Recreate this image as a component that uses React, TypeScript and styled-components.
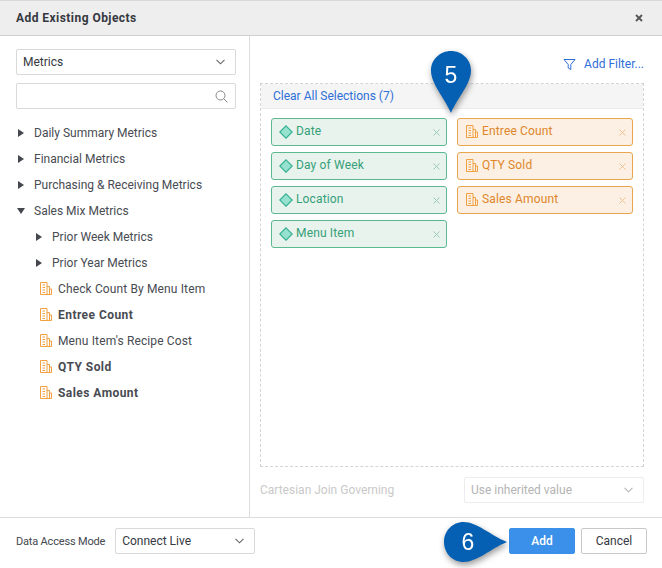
import React from "react";
import styled, { createGlobalStyle } from "styled-components";

const Global = createGlobalStyle`
  html, body { margin: 0; padding: 0; background: #fff; }
  body { font-family: Roboto, "Liberation Sans", Arial, sans-serif; font-size: 12px; color: #35383f; }
`;

const Dialog = styled.div`
  position: relative;
  width: 662px;
  height: 568px;
  display: flex;
  flex-direction: column;
  overflow: hidden;
  background: #fff;
`;
const Header = styled.header`
  height: 36px;
  flex: none;
  box-sizing: border-box;
  display: flex;
  align-items: center;
  justify-content: space-between;
  padding: 0 19px 0 16px;
  background: #eeeeee;
  border-top: 1px solid #d8d8d8;
  border-bottom: 1px solid #cfcfcf;
`;
const Title = styled.div`
  font-weight: 700;
  font-size: 12px;
  letter-spacing: 0.45px;
  color: #35383f;
`;
const Close = styled.svg`
  width: 8px;
  height: 8px;
`;
const Body = styled.div`
  flex: 1;
  min-height: 0;
  display: flex;
`;
const Left = styled.div`
  width: 250px;
  flex: none;
  padding: 13px 13px 0 16px;
  box-sizing: border-box;
  border-right: 1px solid #dcdcdc;
`;
const SelectBox = styled.div<{ $w?: number; $muted?: boolean }>`
  width: ${(p) => (p.$w ? `${p.$w}px` : "auto")};
  height: 26px;
  box-sizing: border-box;
  display: flex;
  align-items: center;
  justify-content: space-between;
  padding: 0 10px 0 6px;
  border: 1px solid ${(p) => (p.$muted ? "#ececec" : "#d9d9d9")};
  border-radius: 2px;
  background: #fff;
  color: ${(p) => (p.$muted ? "#b4b4b4" : "#35383f")};
`;
const SearchBox = styled(SelectBox)`
  margin-top: 8px;
  padding-right: 7px;
  justify-content: flex-end;
`;
const Tree = styled.div`
  margin-top: 11px;
`;
const Row = styled.div<{ $indent: number; $bold?: boolean; $leaf?: boolean }>`
  height: 26px;
  display: flex;
  align-items: center;
  padding-left: ${(p) => p.$indent}px;
  font-weight: ${(p) => (p.$bold ? 700 : 400)};
  letter-spacing: ${(p) => (p.$bold ? "0.45px" : p.$leaf ? "0.13px" : "0")};
  color: #484b52;
`;
const Arrow = styled.span`
  width: 18px;
  flex: none;
  display: flex;
  align-items: center;
  padding-left: 2px;
  box-sizing: border-box;
`;
const MetricSlot = styled.span`
  width: 18px;
  height: 14px;
  flex: none;
  display: flex;
  align-items: flex-start;
`;
const Right = styled.div`
  flex: 1;
  min-width: 0;
  display: flex;
  flex-direction: column;
  padding: 0 18px 14px 10px;
`;
const FilterBar = styled.div`
  height: 47px;
  flex: none;
  display: flex;
  align-items: center;
  justify-content: flex-end;
  padding-top: 9px;
  box-sizing: border-box;
  gap: 8px;
  color: #2f6fd6;
`;
const Drop = styled.div`
  flex: 1;
  min-height: 0;
  border: 1px dashed #d4d4d4;
`;
const DropHead = styled.div`
  height: 24px;
  display: flex;
  align-items: center;
  padding-left: 12px;
  background: #f5f5f5;
  border-bottom: 1px solid #ececec;
  color: #2f6fd6;
`;
const Chips = styled.div`
  display: grid;
  grid-template-columns: 176px 176px;
  grid-auto-rows: 28px;
  column-gap: 10px;
  row-gap: 6px;
  padding: 9px 10px;
`;
const Chip = styled.div<{ $kind: "attr" | "metric" }>`
  display: flex;
  align-items: center;
  box-sizing: border-box;
  padding: 0 6px 2px ${(p) => (p.$kind === "attr" ? 7 : 8)}px;
  border: 1px solid ${(p) => (p.$kind === "attr" ? "#5cb88f" : "#e9a64e")};
  border-radius: 3px;
  background: ${(p) => (p.$kind === "attr" ? "#e8f3ee" : "#fbf0e3")};
  color: ${(p) => (p.$kind === "attr" ? "#35a078" : "#e0862a")};
`;
const ChipLabel = styled.span<{ $kind: "attr" | "metric" }>`
  flex: 1;
  margin-left: ${(p) => (p.$kind === "attr" ? 3 : 4)}px;
  letter-spacing: 0.15px;
`;
const ChipIcon = styled.span<{ $kind: "attr" | "metric" }>`
  display: flex;
  flex: none;
  margin-top: ${(p) => (p.$kind === "attr" ? 2 : 1)}px;
`;
const ChipX = styled.svg`
  width: 7px;
  height: 7px;
  flex: none;
  margin-top: 2px;
`;
const Governing = styled.div`
  flex: none;
  margin-top: 10px;
  display: flex;
  align-items: center;
  justify-content: space-between;
  color: #c9c9c9;
`;
const Footer = styled.footer`
  height: 51px;
  flex: none;
  box-sizing: border-box;
  border-top: 1px solid #dcdcdc;
  display: flex;
  align-items: center;
  padding: 0 15px 4px 16px;
`;
const ModeLabel = styled.span`
  font-size: 11px;
  letter-spacing: -0.18px;
  margin-right: 10px;
  color: #44474e;
`;
const Spacer = styled.div`
  flex: 1;
`;
const Button = styled.button<{ $primary?: boolean }>`
  width: 66px;
  height: 26px;
  margin-left: 6px;
  padding: 0;
  font: inherit;
  font-weight: ${(p) => (p.$primary ? 500 : 400)};
  border-radius: 2px;
  border: 1px solid ${(p) => (p.$primary ? "#3b91ea" : "#c9c9c9")};
  background: ${(p) => (p.$primary ? "#3b91ea" : "#fff")};
  color: ${(p) => (p.$primary ? "#fff" : "#35383f")};
`;
const PinWrap = styled.div<{ $x: number; $y: number; $w: number; $h: number }>`
  position: absolute;
  left: ${(p) => p.$x}px;
  top: ${(p) => p.$y}px;
  width: ${(p) => p.$w}px;
  height: ${(p) => p.$h}px;
  filter: drop-shadow(1px 3px 3px rgba(0, 0, 0, 0.4));
`;
const PinSvg = styled.svg`
  display: block;
  width: 100%;
  height: 100%;
`;
const PinNum = styled.span<{ $x: number; $y: number }>`
  position: absolute;
  left: ${(p) => p.$x}px;
  top: ${(p) => p.$y}px;
  width: 24px;
  text-align: center;
  font-family: "Liberation Sans", Arial, sans-serif;
  font-size: 23px;
  line-height: 24px;
  color: #fff;
`;

const Chevron = () => (
  <svg width="9" height="6" viewBox="0 0 9 6">
    <path d="M.5.8 4.5 4.8l4-4" fill="none" stroke={"#666"} strokeWidth="1.1" />
  </svg>
);
const MutedChevron = () => (
  <svg width="9" height="6" viewBox="0 0 9 6">
    <path d="M.5.8 4.5 4.8l4-4" fill="none" stroke={"#b5b5b5"} strokeWidth="1.1" />
  </svg>
);
const Caret = ({ open }: { open?: boolean }) =>
  open ? (
    <svg width="8" height="6" viewBox="0 0 8 6" style={{ marginLeft: -1 }}><path d="M0 0h8L4 6z" fill="#44474e" /></svg>
  ) : (
    <svg width="6" height="8" viewBox="0 0 6 8"><path d="M0 0l6 4-6 4z" fill="#44474e" /></svg>
  );
const MetricIcon = () => (
  <svg width="12" height="13" viewBox="0 0 12 13" fill="none" stroke="#f0a040" strokeWidth="1">
    <path d="M.5.5h6.5v12H.5zM7 4.5h2.5v8H7M9.5 7h2v5.5h-2M2.5 3h2.5M2.5 5.5h2.5M2.5 8h2.5M2.5 10.5h2.5" />
  </svg>
);
const AttrIcon = () => (
  <svg width="14" height="14" viewBox="0 0 14 14">
    <path d="M7 .8 13.2 7 7 13.2.8 7z" fill="#97e2cf" stroke="#36b193" strokeWidth="1.2" />
  </svg>
);
const Cross = ({ c }: { c: string }) => (
  <ChipX viewBox="0 0 7 7"><path d="M.5.5l6 6M6.5.5l-6 6" stroke={c} strokeWidth="1" /></ChipX>
);

type Item = { label: string; indent: number; kind: "caret" | "open" | "metric"; bold?: boolean };
const items: Item[] = [
  { label: "Daily Summary Metrics", indent: 0, kind: "caret" },
  { label: "Financial Metrics", indent: 0, kind: "caret" },
  { label: "Purchasing & Receiving Metrics", indent: 0, kind: "caret" },
  { label: "Sales Mix Metrics", indent: 0, kind: "open" },
  { label: "Prior Week Metrics", indent: 18, kind: "caret" },
  { label: "Prior Year Metrics", indent: 18, kind: "caret" },
  { label: "Check Count By Menu Item", indent: 24, kind: "metric" },
  { label: "Entree Count", indent: 24, kind: "metric", bold: true },
  { label: "Menu Item's Recipe Cost", indent: 24, kind: "metric" },
  { label: "QTY Sold", indent: 24, kind: "metric", bold: true },
  { label: "Sales Amount", indent: 24, kind: "metric", bold: true },
];
const chips: { label: string; kind: "attr" | "metric" }[] = [
  { label: "Date", kind: "attr" },
  { label: "Entree Count", kind: "metric" },
  { label: "Day of Week", kind: "attr" },
  { label: "QTY Sold", kind: "metric" },
  { label: "Location", kind: "attr" },
  { label: "Sales Amount", kind: "metric" },
  { label: "Menu Item", kind: "attr" },
];

export default function App() {
  return (
    <Dialog>
      <Global />
      <Header>
        <Title>Add Existing Objects</Title>
        <Close viewBox="0 0 8 8"><path d="M1 1l6 6M7 1L1 7" stroke="#555" strokeWidth="1.8" /></Close>
      </Header>
      <Body>
        <Left>
          <SelectBox>
            Metrics
            <Chevron />
          </SelectBox>
          <SearchBox>
            <svg width="13" height="13" viewBox="0 0 13 13" fill="none" stroke="#888" strokeWidth="1">
              <circle cx="5.5" cy="5.5" r="4.5" />
              <path d="M8.8 8.8 12.5 12.5" />
            </svg>
          </SearchBox>
          <Tree>
            {items.map((it) => (
              <Row key={it.label} $indent={it.indent} $bold={it.bold} $leaf={it.kind === "metric"}>
                {it.kind === "metric" ? (
                  <MetricSlot><MetricIcon /></MetricSlot>
                ) : (
                  <Arrow><Caret open={it.kind === "open"} /></Arrow>
                )}
                {it.label}
              </Row>
            ))}
          </Tree>
        </Left>
        <Right>
          <FilterBar>
            <svg width="13" height="13" viewBox="0 0 13 13" fill="none" stroke="#2f6fd6" strokeWidth="1">
              <path d="M1 1.5h11L7.8 6.5v5L5.2 10V6.5z" />
            </svg>
            Add Filter...
          </FilterBar>
          <Drop>
            <DropHead>Clear All Selections (7)</DropHead>
            <Chips>
              {chips.map((c) => (
                <Chip key={c.label} $kind={c.kind}>
                  <ChipIcon $kind={c.kind}>{c.kind === "attr" ? <AttrIcon /> : <MetricIcon />}</ChipIcon>
                  <ChipLabel $kind={c.kind}>{c.label}</ChipLabel>
                  <Cross c={c.kind === "attr" ? "#9cc9b4" : "#eec391"} />
                </Chip>
              ))}
            </Chips>
          </Drop>
          <Governing>
            Cartesian Join Governing
            <SelectBox $w={180} $muted>
              Use inherited value
              <MutedChevron />
            </SelectBox>
          </Governing>
        </Right>
      </Body>
      <Footer>
        <ModeLabel>Data Access Mode</ModeLabel>
        <SelectBox $w={140}>
          Connect Live
          <Chevron />
        </SelectBox>
        <Spacer />
        <Button $primary>Add</Button>
        <Button>Cancel</Button>
      </Footer>
      <PinWrap $x={431} $y={51} $w={40} $h={62}>
        <PinSvg viewBox="0 0 40 62">
          <path d="M20 0C31 0 40 8.5 40 19.5 40 33 27 46 20 62 13 46 0 33 0 19.5 0 8.5 9 0 20 0z" fill="#0560b4" />
        </PinSvg>
        <PinNum $x={8} $y={12}>5</PinNum>
      </PinWrap>
      <PinWrap $x={444} $y={522} $w={63} $h={40}>
        <PinSvg viewBox="0 0 63 40">
          <path d="M0 20C0 9 8.5 0 19.5 0 33 0 46 13 63 20 46 27 33 40 19.5 40 8.5 40 0 31 0 20z" fill="#0560b4" />
        </PinSvg>
        <PinNum $x={12} $y={8}>6</PinNum>
      </PinWrap>
    </Dialog>
  );
}
